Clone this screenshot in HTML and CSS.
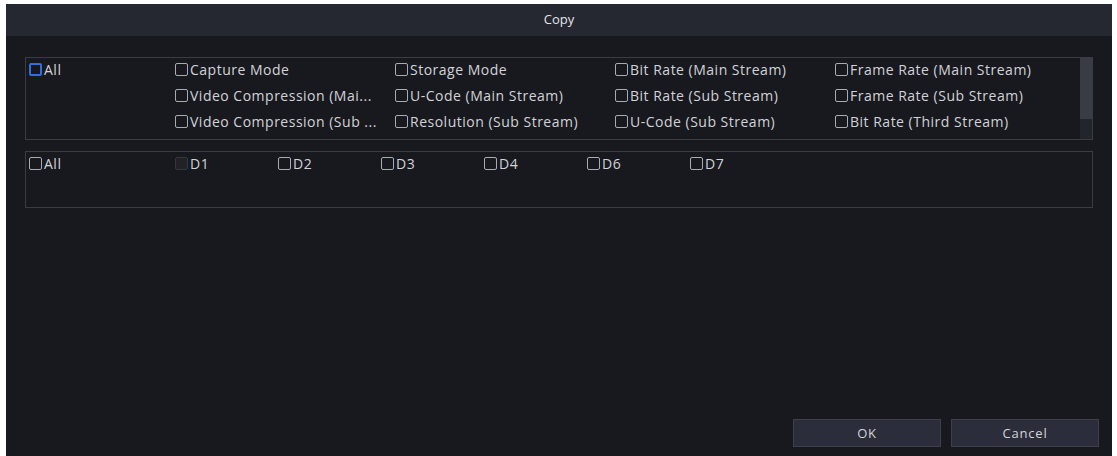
FILE: index.html
```html
<!DOCTYPE html>
<html>
<head>
<meta charset="utf-8">
<link rel="stylesheet" href="styles.css">
</head>
<body>
<div class="dialog">
  <div class="titlebar">Copy</div>
  <div class="body">
    <div class="panel panel-params">
      <div class="param-grid">
        <label class="item all"><span class="cb cb-focus"></span><span>All</span></label>
        <div class="param-cols">
          <label class="item"><span class="cb"></span><span>Capture Mode</span></label>
          <label class="item"><span class="cb"></span><span>Storage Mode</span></label>
          <label class="item"><span class="cb"></span><span>Bit Rate (Main Stream)</span></label>
          <label class="item"><span class="cb"></span><span>Frame Rate (Main Stream)</span></label>
          <label class="item"><span class="cb"></span><span>Video Compression (Mai...</span></label>
          <label class="item"><span class="cb"></span><span>U-Code (Main Stream)</span></label>
          <label class="item"><span class="cb"></span><span>Bit Rate (Sub Stream)</span></label>
          <label class="item"><span class="cb"></span><span>Frame Rate (Sub Stream)</span></label>
          <label class="item"><span class="cb"></span><span>Video Compression (Sub ...</span></label>
          <label class="item"><span class="cb"></span><span>Resolution (Sub Stream)</span></label>
          <label class="item"><span class="cb"></span><span>U-Code (Sub Stream)</span></label>
          <label class="item"><span class="cb"></span><span>Bit Rate (Third Stream)</span></label>
          <span class="item"><span class="cb"></span></span>
          <span class="item"><span class="cb"></span></span>
          <span class="item"><span class="cb"></span></span>
          <span class="item"><span class="cb"></span></span>
        </div>
      </div>
      <div class="scrollbar"><div class="thumb"></div></div>
    </div>
    <div class="panel panel-channels">
      <label class="item all"><span class="cb"></span><span>All</span></label>
      <div class="chan-row">
        <label class="item chan disabled"><span class="cb"></span><span>D1</span></label>
        <label class="item chan"><span class="cb"></span><span>D2</span></label>
        <label class="item chan"><span class="cb"></span><span>D3</span></label>
        <label class="item chan"><span class="cb"></span><span>D4</span></label>
        <label class="item chan"><span class="cb"></span><span>D6</span></label>
        <label class="item chan"><span class="cb"></span><span>D7</span></label>
      </div>
    </div>
    <div class="actions">
      <button class="btn">OK</button>
      <button class="btn">Cancel</button>
    </div>
  </div>
</div>
</body>
</html>
```

FILE: styles.css
```css
html, body {
  margin: 0;
  padding: 0;
  background: #ffffff;
}
body {
  padding: 4px 5px 0 6px;
  font-family: "Open Sans", "Noto Sans", sans-serif;
  font-size: 14px;
  color: #d2d3d7;
}
.dialog {
  width: 1106px;
  height: 452px;
  background: #18191f;
  display: flex;
  flex-direction: column;
}
.titlebar {
  height: 32px;
  background: #252731;
  display: flex;
  align-items: center;
  justify-content: center;
  font-size: 13px;
  color: #e4e4e8;
  padding-bottom: 2px;
  box-sizing: border-box;
}
.body {
  flex: 1;
  display: flex;
  flex-direction: column;
  padding: 21px 19px 9px 19px;
}
.panel {
  border: 1px solid #3a3c44;
  box-sizing: border-box;
}
.panel-params {
  height: 83px;
  overflow: hidden;
  display: flex;
}
.param-grid {
  flex: 1;
  display: flex;
  padding-left: 3px;
}
.item {
  display: flex;
  align-items: flex-start;
  gap: 2px;
  height: 26px;
  white-space: nowrap;
  letter-spacing: 0.5px;
  line-height: 14px;
}
.item .cb {
  margin-top: 5px;
}
.item span:last-child {
  margin-top: 5px;
}
.all {
  width: 146px;
  flex: none;
}
.param-cols {
  display: grid;
  grid-template-columns: repeat(4, 220px);
}
.cb {
  width: 11px;
  height: 11px;
  border: 1px solid #a9abb0;
  border-radius: 2px;
  flex: none;
  display: inline-block;
}
.cb-focus {
  border: 2px solid #2f6fd8;
  width: 9px;
  height: 9px;
}
.scrollbar {
  width: 12px;
  background: #23252c;
  flex: none;
}
.thumb {
  height: 61px;
  background: #393b45;
}
.panel-channels {
  margin-top: 11px;
  height: 57px;
  display: flex;
  padding-left: 3px;
}
.chan-row {
  display: flex;
}
.chan {
  width: 103px;
}
.chan.disabled .cb {
  border-color: #34363c;
  background: #202228;
}
.actions {
  margin-top: auto;
  display: flex;
  justify-content: flex-end;
  gap: 10px;
  margin-right: -6px;
}
.btn {
  width: 148px;
  height: 28px;
  background: #2b2d3b;
  border: 1px solid #3d3f4d;
  color: #d4d4d8;
  font-family: "Open Sans", "Noto Sans", sans-serif;
  font-size: 13px;
  letter-spacing: 0.8px;
  padding: 0;
}
```
